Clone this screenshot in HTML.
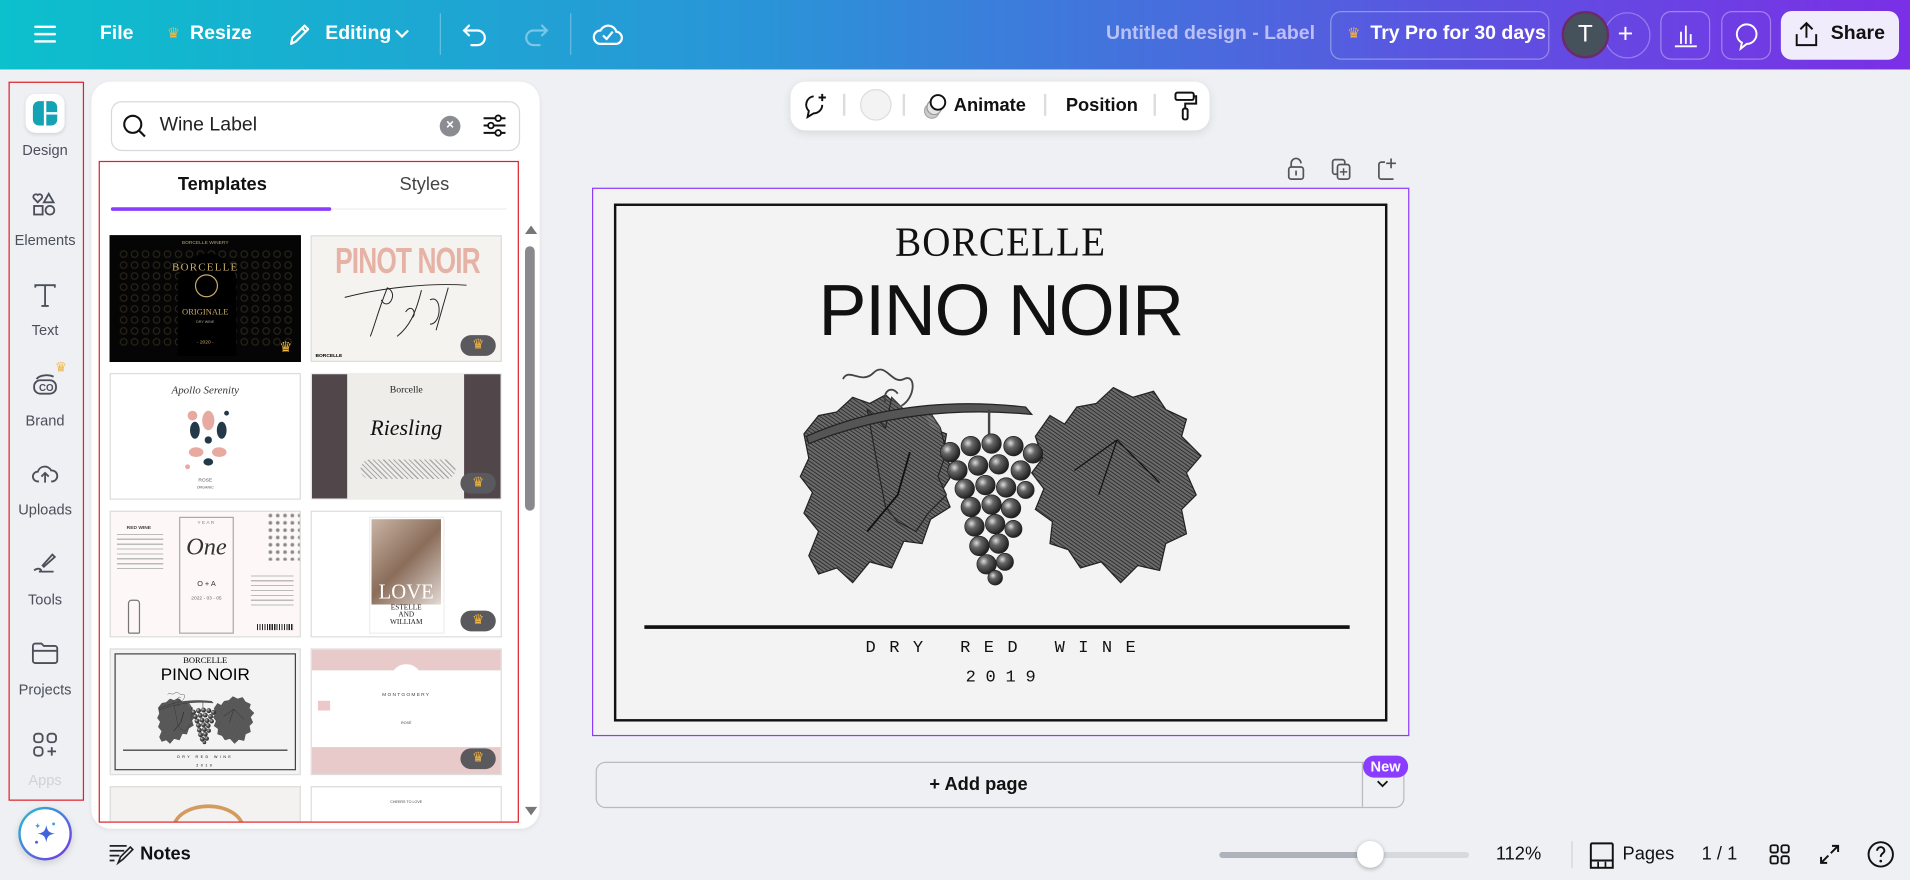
<!DOCTYPE html>
<html><head><meta charset="utf-8">
<style>
*{box-sizing:border-box;margin:0;padding:0}
html,body{width:1910px;height:880px;overflow:hidden;background:#eef0f3;font-family:"Liberation Sans",sans-serif}
#w{position:absolute;left:0;top:0;width:1568px;height:722px;transform:scale(1.2181,1.2188);transform-origin:0 0;background:#eef0f3;overflow:hidden}
.a{position:absolute}
.top{left:0;top:0;width:1568px;height:57px;background:linear-gradient(90deg,#0cc0cc 0%,#2a94d8 40%,#5a55e0 75%,#7b2fe6 100%)}
.tw{color:#fff;font-weight:bold;font-size:16px}
.sep{width:1px;height:34px;background:rgba(255,255,255,.3);top:11px}
.rail{font-size:12px;color:#4a4f5a;text-align:center;width:70px;left:2px}
.thumb{position:absolute;width:157px;height:104px;border:1px solid #dcdcdc;overflow:hidden}
.crown{position:absolute;right:4px;bottom:4px;width:29px;height:17px;border-radius:9px;background:#5a5a5e;color:#f5b740;font-size:11px;text-align:center;line-height:17px}
.btn{border:1px solid rgba(255,255,255,.35);border-radius:9px;height:40px;top:9px}
</style></head><body><div id="w">

<!-- top bar -->
<div class="a top"></div>
<svg class="a" style="left:27px;top:19px" width="20" height="18"><path d="M2 3h16M2 9h16M2 15h16" stroke="#fff" stroke-width="2" stroke-linecap="round"/></svg>
<div class="a tw" style="left:82px;top:19px">File</div>
<div class="a" style="left:137px;top:20px;color:#f5b740;font-size:12px">♛</div>
<div class="a tw" style="left:156px;top:19px">Resize</div>
<svg class="a" style="left:235px;top:17px" width="22" height="22"><path d="M4 19l1-5L15 4l3 3L8 17z M13 6l3 3" stroke="#fff" stroke-width="1.8" fill="none" stroke-linejoin="round"/></svg>
<div class="a tw" style="left:267px;top:19px">Editing</div>
<svg class="a" style="left:323px;top:22px" width="14" height="12"><path d="M2 3l5 5 5-5" stroke="#fff" stroke-width="1.8" fill="none"/></svg>
<div class="a sep" style="left:361px"></div>
<svg class="a" style="left:379px;top:17px" width="24" height="22"><path d="M6 4L2 8l4 4M2 8h11a6 6 0 010 12H8" stroke="#fff" stroke-width="1.8" fill="none" stroke-linecap="round"/></svg>
<svg class="a" style="left:427px;top:17px" width="24" height="22"><path d="M18 4l4 4-4 4M22 8H11a6 6 0 000 12h5" stroke="rgba(255,255,255,.4)" stroke-width="1.8" fill="none" stroke-linecap="round"/></svg>
<div class="a sep" style="left:468px"></div>
<svg class="a" style="left:486px;top:16px" width="26" height="24"><path d="M7 20h12a5 5 0 001-10 7 7 0 00-13-1 5.5 5.5 0 000 11z" stroke="#fff" stroke-width="1.8" fill="none"/><path d="M9 13l3 3 5-6" stroke="#fff" stroke-width="1.8" fill="none"/></svg>
<div class="a" style="left:908px;top:19px;color:rgba(225,220,255,.75);font-size:16px;font-weight:bold">Untitled design - Label</div>
<div class="a btn" style="left:1092px;width:180px"></div>
<div class="a" style="left:1106px;top:20px;color:#f5b740;font-size:12px">♛</div>
<div class="a tw" style="left:1125px;top:19px">Try Pro for 30 days</div>
<div class="a" style="left:1317px;top:10px;width:38px;height:38px;border-radius:50%;border:1px solid rgba(255,255,255,.3)"></div>
<div class="a tw" style="left:1328px;top:15px;font-weight:normal;font-size:22px">+</div>
<div class="a" style="left:1282px;top:9px;width:39px;height:39px;border-radius:50%;background:#45525b;border:2px solid #6b2a6a;color:#fff;font-size:20px;text-align:center;line-height:35px">T</div>
<div class="a btn" style="left:1363px;width:41px"></div>
<svg class="a" style="left:1373px;top:18px" width="22" height="22"><path d="M2 20h18M7 18V8M11 18V3M15 18V10" stroke="#fff" stroke-width="1.5"/></svg>
<div class="a btn" style="left:1413px;width:41px"></div>
<svg class="a" style="left:1423px;top:18px" width="22" height="24"><path d="M11 2a8 8 0 00-4 15l-1 5 5-4a8 8 0 000-16z" stroke="#fff" stroke-width="1.6" fill="none"/></svg>
<div class="a" style="left:1462px;top:9px;width:97px;height:40px;border-radius:9px;background:#f1ecfc"></div>
<svg class="a" style="left:1472px;top:17px" width="22" height="22"><path d="M11 14V2M6 7l5-5 5 5M3 11v9h16v-9" stroke="#111" stroke-width="1.6" fill="none"/></svg>
<div class="a" style="left:1503px;top:19px;font-weight:bold;font-size:16px;color:#111">Share</div>

<!-- left rail -->
<div class="a" style="left:7px;top:67px;width:62px;height:590px;border:1.5px solid #e0202a"></div>
<div class="a" style="left:21px;top:77px;width:32px;height:32px;border-radius:8px;background:#fff;box-shadow:0 1px 3px rgba(0,0,0,.12)"></div>
<div class="a" style="left:27px;top:83px;width:20px;height:20px;border-radius:5px;background:#13a3b5"></div>
<div class="a" style="left:36px;top:83px;width:2px;height:20px;background:#fff"></div>
<div class="a" style="left:38px;top:92px;width:9px;height:2px;background:#fff"></div>
<div class="a rail" style="top:116px">Design</div>
<svg class="a" style="left:26px;top:157px" width="22" height="22"><path d="M5 9l-3-3a2 2 0 013-3 2 2 0 013 3z M14 2l4 7h-8z" stroke="#4a4f5a" stroke-width="1.5" fill="none"/><rect x="2" y="12" width="7" height="7" stroke="#4a4f5a" stroke-width="1.5" fill="none"/><circle cx="15" cy="15.5" r="3.6" stroke="#4a4f5a" stroke-width="1.5" fill="none"/></svg>
<div class="a rail" style="top:190px">Elements</div>
<svg class="a" style="left:26px;top:231px" width="22" height="22"><path d="M3 5V3h16v2M11 3v17M8 20h6" stroke="#4a4f5a" stroke-width="1.5" fill="none"/></svg>
<div class="a rail" style="top:264px">Text</div>
<svg class="a" style="left:25px;top:303px" width="24" height="24"><rect x="3" y="9" width="18" height="11" rx="5" stroke="#4a4f5a" stroke-width="1.5" fill="none"/><path d="M5 8a9 5 0 0114-2" stroke="#4a4f5a" stroke-width="1.5" fill="none"/><text x="7" y="18" font-size="8" font-family="Liberation Sans" fill="#4a4f5a" font-weight="bold">CO</text></svg>
<div class="a" style="left:45px;top:295px;color:#f5b740;font-size:11px">♛</div>
<div class="a rail" style="top:338px">Brand</div>
<svg class="a" style="left:25px;top:377px" width="24" height="22"><path d="M7 18H6a4 4 0 010-8 6 6 0 0111-1 4.5 4.5 0 011 9h-1" stroke="#4a4f5a" stroke-width="1.5" fill="none"/><path d="M12 19v-7M9 14l3-3 3 3" stroke="#4a4f5a" stroke-width="1.5" fill="none"/></svg>
<div class="a rail" style="top:411px">Uploads</div>
<svg class="a" style="left:25px;top:450px" width="24" height="24"><path d="M10 14l8-9 2 2-9 8z M3 18c4-3 8 0 4 1h12" stroke="#4a4f5a" stroke-width="1.5" fill="none"/></svg>
<div class="a rail" style="top:485px">Tools</div>
<svg class="a" style="left:25px;top:525px" width="24" height="22"><path d="M2 5a2 2 0 012-2h5l2 2h9a2 2 0 012 2v10a2 2 0 01-2 2H4a2 2 0 01-2-2z M2 9h20" stroke="#4a4f5a" stroke-width="1.5" fill="none"/></svg>
<div class="a rail" style="top:559px">Projects</div>
<svg class="a" style="left:25px;top:599px" width="24" height="24"><rect x="3" y="3" width="7" height="7" rx="2.5" stroke="#4a4f5a" stroke-width="1.5" fill="none"/><rect x="14" y="3" width="7" height="7" rx="2.5" stroke="#4a4f5a" stroke-width="1.5" fill="none"/><rect x="3" y="14" width="7" height="7" rx="2.5" stroke="#4a4f5a" stroke-width="1.5" fill="none"/><path d="M17.5 14v7M14 17.5h7" stroke="#4a4f5a" stroke-width="1.5"/></svg>
<div class="a rail" style="top:633px;color:#cfd2d8">Apps</div>
<div class="a" style="left:15px;top:662px;width:44px;height:44px;border-radius:50%;background:linear-gradient(135deg,#1ec3d0,#7b2fe6);box-shadow:0 2px 6px rgba(0,0,0,.15)"></div>
<div class="a" style="left:17px;top:664px;width:40px;height:40px;border-radius:50%;background:#fff"></div>
<svg class="a" style="left:25px;top:672px" width="24" height="24"><path d="M13 5c1 5 2 6 7 7-5 1-6 2-7 7-1-5-2-6-7-7 5-1 6-2 7-7z" fill="#4263d9"/><path d="M6 3c.4 2 .8 2.4 2.5 2.5C6.8 5.9 6.4 6.3 6 8 5.6 6.3 5.200 5.900 3.5 5.5 5.2 5.1 5.6 4.7 6 3z" fill="#3fa0e0"/><circle cx="19" cy="4" r="1.2" fill="#3fa0e0"/><circle cx="5" cy="19" r="1.2" fill="#4263d9"/></svg>

<!-- panel -->
<div class="a" style="left:75px;top:67px;width:368px;height:613px;background:#fff;border-radius:16px;box-shadow:0 1px 4px rgba(0,0,0,.06)"></div>
<div class="a" style="left:91px;top:83px;width:336px;height:41px;border:1px solid #d7d9de;border-radius:9px"></div>
<svg class="a" style="left:100px;top:93px" width="22" height="22"><circle cx="9" cy="9" r="7" stroke="#111" stroke-width="1.7" fill="none"/><path d="M14 14l5 5" stroke="#111" stroke-width="1.8"/></svg>
<div class="a" style="left:131px;top:94px;font-size:16px;color:#222">Wine Label</div>
<div class="a" style="left:361px;top:95px;width:17px;height:17px;border-radius:50%;background:#8a8c92;color:#fff;font-size:11px;text-align:center;line-height:17px;font-weight:bold">×</div>
<svg class="a" style="left:395px;top:92px" width="22" height="22"><path d="M2 5h18M2 11h18M2 17h18" stroke="#111" stroke-width="1.6"/><circle cx="14" cy="5" r="2.3" fill="#fff" stroke="#111" stroke-width="1.5"/><circle cx="8" cy="11" r="2.3" fill="#fff" stroke="#111" stroke-width="1.5"/><circle cx="14" cy="17" r="2.3" fill="#fff" stroke="#111" stroke-width="1.5"/></svg>
<div class="a" style="left:81px;top:132px;width:345px;height:543px;border:1.5px solid #e0202a"></div>
<div class="a" style="left:146px;top:143px;font-size:15px;font-weight:bold;color:#111">Templates</div>
<div class="a" style="left:328px;top:143px;font-size:15px;color:#444">Styles</div>
<div class="a" style="left:91px;top:170px;width:181px;height:3px;background:#8b3dff;border-radius:2px"></div>
<div class="a" style="left:272px;top:171px;width:144px;height:1px;background:#eee"></div>
<!-- scrollbar -->
<div class="a" style="left:431px;top:185px;width:0;height:0;border-left:5px solid transparent;border-right:5px solid transparent;border-bottom:7px solid #777"></div>
<div class="a" style="left:431px;top:202px;width:8px;height:217px;border-radius:4px;background:#8a8a8e"></div>
<div class="a" style="left:431px;top:662px;width:0;height:0;border-left:5px solid transparent;border-right:5px solid transparent;border-top:7px solid #777"></div>

<!-- thumbnails -->
<div class="thumb" style="left:90px;top:193px;background:#050505;border-color:#050505">
 <div class="a" style="left:0;top:2px;width:100%;text-align:center;font-size:4px;color:#b9a06a">BORCELLE WINERY</div>
 <div class="a" style="left:6px;top:10px;width:145px;height:80px;background:radial-gradient(circle,transparent 2px,#3a3320 2.5px,transparent 3.5px) 0 0/9px 9px;opacity:.9"></div>
 <div class="a" style="left:55px;top:14px;width:48px;height:84px;border-radius:24px 24px 0 0;background:#000"></div>
 <div class="a" style="left:0;top:20px;width:100%;text-align:center;font-family:'Liberation Serif';font-size:9px;color:#c8aa68;letter-spacing:1px">BORCELLE</div>
 <div class="a" style="left:69px;top:31px;width:19px;height:19px;border-radius:50%;border:1px solid #c8aa68"></div>
 <div class="a" style="left:0;top:58px;width:100%;text-align:center;font-family:'Liberation Serif';font-size:7px;color:#c8aa68">ORIGINALE</div>
 <div class="a" style="left:0;top:68px;width:100%;text-align:center;font-size:3px;color:#aa9">DRY WINE</div>
 <div class="a" style="left:0;top:84px;width:100%;text-align:center;font-size:4px;color:#c8aa68">- 2020 -</div>
 <div class="a" style="right:6px;bottom:4px;color:#f5b740;font-size:12px">♛</div>
</div>
<div class="thumb" style="left:255px;top:193px;background:#f5f3ef">
 <div class="a" style="left:-20px;top:2px;width:197px;text-align:center;font-size:30px;font-weight:bold;color:#e7b2a6;letter-spacing:-1px;transform:scaleX(.72);line-height:38px;white-space:nowrap">PINOT NOIR</div>
 <svg class="a" style="left:22px;top:32px" width="120" height="60"><path d="M5 18c30-8 70-12 100-10M40 10c-8 20-10 30-14 40M40 10c10 5 0 20-5 10 M55 30c5-8 10 2 5 5 M68 12c-5 20-10 30-20 38 M75 20c10-5 10 20 0 20 M90 10l-10 35" stroke="#222" stroke-width=".8" fill="none"/></svg>
 <div class="a" style="left:3px;bottom:2px;font-size:4px;font-weight:bold">BORCELLE</div>
 <div class="crown">♛</div>
</div>
<div class="thumb" style="left:90px;top:306px;background:#fff">
 <div class="a" style="left:0;top:8px;width:100%;text-align:center;font-family:'Liberation Serif';font-style:italic;font-size:9px;color:#333">Apollo Serenity</div>
 <svg class="a" style="left:57px;top:24px" width="46" height="58"><circle cx="10" cy="10" r="4" fill="#e8aaa0"/><ellipse cx="12" cy="22" rx="4" ry="7" fill="#23394a"/><ellipse cx="23" cy="14" rx="5" ry="8" fill="#e8aaa0"/><ellipse cx="34" cy="22" rx="4" ry="7" fill="#23394a"/><circle cx="23" cy="30" r="3" fill="#23394a"/><ellipse cx="13" cy="40" rx="6" ry="4" fill="#e8aaa0"/><ellipse cx="32" cy="40" rx="6" ry="4" fill="#e8aaa0"/><ellipse cx="23" cy="48" rx="4" ry="3" fill="#23394a"/><circle cx="38" cy="8" r="2" fill="#23394a"/><circle cx="6" cy="52" r="2" fill="#e8aaa0"/></svg>
 <div class="a" style="left:0;top:84px;width:100%;text-align:center;font-size:4px;color:#555">ROSE</div>
 <div class="a" style="left:0;top:91px;width:100%;text-align:center;font-size:3px;color:#555">ORGANIC</div>
</div>
<div class="thumb" style="left:255px;top:306px;background:#eeede9;border-color:#eee">
 <div class="a" style="left:0;top:0;width:29px;height:104px;background:#51474b"></div>
 <div class="a" style="right:0;top:0;width:30px;height:104px;background:#51474b"></div>
 <div class="a" style="left:0;top:8px;width:100%;text-align:center;font-family:'Liberation Serif';font-size:8px;color:#222">Borcelle</div>
 <div class="a" style="left:0;top:34px;width:100%;text-align:center;font-family:'Liberation Serif';font-style:italic;font-size:18px;color:#111">Riesling</div>
 <div class="a" style="left:40px;top:70px;width:78px;height:16px;background:repeating-linear-gradient(45deg,#aaa 0 1px,transparent 1px 3px);border-radius:8px"></div>
 <div class="crown">♛</div>
</div>
<div class="thumb" style="left:90px;top:419px;background:#fdf8f7">
 <div class="a" style="left:3px;top:10px;font-size:4px;color:#444;font-weight:bold;width:40px;text-align:center">RED WINE</div>
 <div class="a" style="left:5px;top:18px;width:38px;height:30px;background:repeating-linear-gradient(#bbb 0 1px,transparent 1px 4px)"></div>
 <div class="a" style="left:56px;top:4px;width:45px;height:96px;border:1px solid #aaa"></div>
 <div class="a" style="left:56px;top:6px;width:45px;text-align:center;font-size:4px;color:#888;letter-spacing:1px">YEAR</div>
 <div class="a" style="left:56px;top:18px;width:45px;text-align:center;font-family:'Liberation Serif';font-style:italic;font-size:20px;color:#333">One</div>
 <div class="a" style="left:56px;top:57px;width:45px;text-align:center;font-size:6px;color:#333">O + A</div>
 <div class="a" style="left:56px;top:68px;width:45px;text-align:center;font-size:4px;color:#666">2022 - 03 - 05</div>
 <div class="a" style="left:128px;top:0;width:28px;height:40px;background:radial-gradient(circle,#888 1px,transparent 2px) 0 0/6px 6px"></div>
 <div class="a" style="left:115px;top:52px;width:35px;height:25px;background:repeating-linear-gradient(#bbb 0 1px,transparent 1px 4px)"></div>
 <div class="a" style="left:120px;top:92px;width:30px;height:5px;background:repeating-linear-gradient(90deg,#222 0 1px,transparent 1px 2px)"></div>
 <div class="a" style="left:14px;top:72px;width:10px;height:28px;border:1px solid #777;border-radius:3px 3px 1px 1px"></div>
</div>
<div class="thumb" style="left:255px;top:419px;background:#fff">
 <div class="a" style="left:47px;top:4px;width:62px;height:96px;border:1px solid #eee;background:#fff"></div>
 <div class="a" style="left:49px;top:6px;width:57px;height:70px;background:linear-gradient(135deg,#c9b4a4,#8a6d5a 50%,#e2dad4)"></div>
 <div class="a" style="left:49px;top:57px;width:57px;text-align:center;font-family:'Liberation Serif';font-size:17px;color:#fff;line-height:18px">LOVE</div>
 <div class="a" style="left:49px;top:76px;width:57px;text-align:center;font-family:'Liberation Serif';font-size:6px;color:#222;line-height:6px">ESTELLE<br>AND<br>WILLIAM</div>
 <div class="crown">♛</div>
</div>
<div class="thumb" style="left:90px;top:532px;background:#f3f3f3">
 <div class="a" style="left:3px;top:3px;width:149px;height:96px;border:1px solid #444"></div>
 <div class="a" style="left:0;top:5px;width:100%;text-align:center;font-family:'Liberation Serif';font-size:7px">BORCELLE</div>
 <div class="a" style="left:0;top:12px;width:100%;text-align:center;font-size:14px">PINO NOIR</div>
 <svg class="a" style="left:37px;top:33px" width="82" height="45" viewBox="0 0 340 185"><use href="#grape"/></svg>
 <div class="a" style="left:10px;top:82px;width:135px;height:1px;background:#333"></div>
 <div class="a" style="left:0;top:86px;width:100%;text-align:center;font-size:3px;letter-spacing:2px">DRY RED WINE</div>
 <div class="a" style="left:0;top:93px;width:100%;text-align:center;font-size:3px;letter-spacing:2px">2019</div>
</div>
<div class="thumb" style="left:255px;top:532px;background:#fff">
 <div class="a" style="left:0;top:0;width:100%;height:17px;background:#e8caca"></div>
 <div class="a" style="left:0;bottom:0;width:100%;height:22px;background:#e8caca"></div>
 <div class="a" style="left:65px;top:12px;width:25px;height:12px;border-radius:12px 12px 0 0;background:#fff"></div>
 <div class="a" style="left:0;top:34px;width:100%;text-align:center;font-size:4px;color:#444;letter-spacing:1px">MONTGOMERY</div>
 <div class="a" style="left:0;top:58px;width:100%;text-align:center;font-size:3px;color:#444">ROSÉ</div>
 <div class="a" style="left:5px;top:42px;width:10px;height:8px;background:#edc8c8"></div>
 <div class="crown">♛</div>
</div>
<div class="thumb" style="left:90px;top:645px;height:29px;background:#f4f2f0;border-bottom:none">
 <div class="a" style="left:50px;top:14px;width:60px;height:40px;border-radius:50%;border:3px solid #d49a5e"></div>
</div>
<div class="thumb" style="left:255px;top:645px;height:29px;background:#fff;border-bottom:none">
 <div class="a" style="left:0;top:10px;width:100%;text-align:center;font-size:3px;color:#444">CHEERS TO LOVE</div>
</div>

<!-- floating toolbar -->
<div class="a" style="left:649px;top:67px;width:344px;height:40px;background:#fff;border-radius:12px;box-shadow:0 2px 8px rgba(0,0,0,.1)"></div>
<svg class="a" style="left:657px;top:75px" width="24" height="24"><path d="M11 4a7 7 0 00-4 12l-1 5 5-3a7 7 0 007-7" stroke="#111" stroke-width="1.6" fill="none"/><path d="M18 2v6M15 5h6" stroke="#111" stroke-width="1.6"/></svg>
<div class="a" style="left:692px;top:77px;width:2px;height:18px;background:#ddd"></div>
<div class="a" style="left:706px;top:73px;width:26px;height:26px;border-radius:50%;background:#f3f3f3;border:1px solid #ddd"></div>
<div class="a" style="left:741px;top:77px;width:2px;height:18px;background:#ddd"></div>
<svg class="a" style="left:756px;top:75px" width="24" height="24"><circle cx="9" cy="16" r="6" fill="#ccc" stroke="#aaa"/><circle cx="11" cy="13" r="6" fill="#e5e5e5" stroke="#999"/><circle cx="14" cy="9" r="6" fill="#fff" stroke="#111" stroke-width="1.6"/></svg>
<div class="a" style="left:783px;top:78px;font-size:15px;font-weight:bold;color:#111">Animate</div>
<div class="a" style="left:857px;top:77px;width:2px;height:18px;background:#ddd"></div>
<div class="a" style="left:875px;top:78px;font-size:15px;font-weight:bold;color:#111">Position</div>
<div class="a" style="left:947px;top:77px;width:2px;height:18px;background:#ddd"></div>
<svg class="a" style="left:962px;top:74px" width="22" height="26"><rect x="3" y="2" width="15" height="6" rx="1.5" stroke="#111" stroke-width="1.6" fill="none"/><path d="M18 5h2v6h-9v4" stroke="#111" stroke-width="1.6" fill="none"/><rect x="9" y="15" width="4" height="9" rx="1.5" stroke="#111" stroke-width="1.6" fill="none"/></svg>

<!-- page icons -->
<svg class="a" style="left:1055px;top:129px" width="18" height="20"><path d="M5 8V5a4 4 0 018 0" stroke="#555" stroke-width="1.4" fill="none"/><rect x="3" y="8" width="12" height="10" rx="2" stroke="#555" stroke-width="1.4" fill="none"/><path d="M9 11v4" stroke="#555" stroke-width="1.4"/></svg>
<svg class="a" style="left:1092px;top:129px" width="20" height="20"><rect x="2" y="2" width="10" height="12" rx="2" stroke="#555" stroke-width="1.4" fill="none"/><rect x="6" y="6" width="10" height="12" rx="2" stroke="#555" stroke-width="1.4" fill="#eef0f3"/><path d="M11 9v6M8 12h6" stroke="#555" stroke-width="1.2"/></svg>
<svg class="a" style="left:1129px;top:129px" width="20" height="20"><path d="M8 4H5a2 2 0 00-2 2v10a2 2 0 002 2h10M13 1v8M9 5h8" stroke="#555" stroke-width="1.4" fill="none"/></svg>

<!-- page -->
<div class="a" style="left:486px;top:154px;width:671px;height:450px;border:1.5px solid #8b3dff;background:#f3f3f3"></div>
<div class="a" style="left:504px;top:167px;width:635px;height:425px;border:2.5px solid #111"></div>
<div class="a" style="left:486px;top:180px;width:671px;text-align:center;font-family:'Liberation Serif',serif;font-size:32px;color:#111;letter-spacing:1px;transform:scaleY(1.05)">BORCELLE</div>
<div class="a" style="left:486px;top:222px;width:671px;text-align:center;font-family:'Liberation Sans',sans-serif;font-size:59px;color:#111;line-height:66px;letter-spacing:-1px">PINO NOIR</div>
<svg class="a" style="left:652px;top:296px" width="340" height="185" viewBox="0 0 340 185">
<defs>
<pattern id="h" width="2.5" height="2.5" patternUnits="userSpaceOnUse" patternTransform="rotate(35)"><rect width="3" height="3" fill="#6a6a6a"/><path d="M0 0h3" stroke="#1e1e1e" stroke-width="1.2"/></pattern>
<radialGradient id="g" cx=".35" cy=".35" r=".7"><stop offset="0" stop-color="#ddd"/><stop offset=".35" stop-color="#666"/><stop offset="1" stop-color="#1a1a1a"/></radialGradient>
<symbol id="grape" viewBox="0 0 340 185">
<path d="M8 60 L20 45 L35 42 L48 30 L62 35 L75 28 L88 40 L102 38 L112 55 L125 60 L122 78 L132 90 L122 105 L128 120 L112 130 L105 150 L90 148 L80 170 L62 165 L48 182 L35 170 L20 175 L12 160 L20 140 L8 125 L15 108 L5 95 L12 80 Z" fill="url(#h)" stroke="#222" stroke-width="1"/>
<path d="M60 40 L75 55 L80 30 L95 45 L110 40 L120 55 L125 75 L118 95 L125 110 L110 125 L100 140 L85 132 L75 120 L70 95 Z" fill="url(#h)" stroke="#222" stroke-width="1" opacity=".9"/>
<path d="M198 62 L210 45 L222 52 L232 38 L248 35 L262 22 L278 30 L295 25 L305 40 L322 48 L318 62 L334 78 L322 92 L330 110 L318 122 L322 142 L305 150 L300 172 L282 168 L268 182 L252 165 L235 170 L225 155 L210 150 L212 132 L198 122 L205 105 L195 92 L204 80 Z" fill="url(#h)" stroke="#222" stroke-width="1"/>
<path d="M10 62 C60 40 120 30 190 38 L195 44 C130 38 70 45 12 68 Z" fill="#555" stroke="#222"/>
<path d="M40 15 c5-10 15 5 25-5 s15 10 25 5 s10 15 -2 22 M75 35 c-3-10 5-15 10-8" stroke="#444" stroke-width="1.5" fill="none"/>
<path d="M95 75 L85 110 L60 140" stroke="#111" stroke-width="1.5" fill="none"/>
<path d="M265 65 L250 110 M265 65 L300 100 M265 65 L230 90" stroke="#111" stroke-width="1" fill="none"/>
<path d="M160 40 L160 65" stroke="#444" stroke-width="2"/>
<g fill="url(#g)" stroke="#222" stroke-width=".6">
<circle cx="128" cy="75" r="8"/><circle cx="145" cy="70" r="8"/><circle cx="162" cy="68" r="8"/><circle cx="180" cy="70" r="8"/><circle cx="196" cy="76" r="8"/>
<circle cx="134" cy="90" r="8"/><circle cx="151" cy="86" r="8"/><circle cx="168" cy="85" r="8"/><circle cx="186" cy="90" r="8"/>
<circle cx="140" cy="105" r="8"/><circle cx="157" cy="102" r="8"/><circle cx="174" cy="104" r="8"/><circle cx="190" cy="106" r="7"/>
<circle cx="145" cy="120" r="8"/><circle cx="162" cy="118" r="8"/><circle cx="178" cy="121" r="8"/>
<circle cx="148" cy="136" r="8"/><circle cx="165" cy="134" r="8"/><circle cx="180" cy="138" r="7"/>
<circle cx="152" cy="152" r="8"/><circle cx="168" cy="150" r="8"/>
<circle cx="158" cy="167" r="8"/><circle cx="173" cy="165" r="7"/><circle cx="165" cy="178" r="6"/>
</g>
</symbol>
</defs>
<use href="#grape"/>
</svg>
<div class="a" style="left:529px;top:513px;width:579px;height:3px;background:#111"></div>
<div class="a" style="left:486px;top:524px;width:671px;text-align:center;font-family:'Liberation Mono',monospace;font-size:14px;color:#111;letter-spacing:11px;padding-left:11px">DRY RED WINE</div>
<div class="a" style="left:486px;top:548px;width:671px;text-align:center;font-family:'Liberation Mono',monospace;font-size:14px;color:#111;letter-spacing:8px;padding-left:8px">2019</div>

<!-- add page -->
<div class="a" style="left:489px;top:625px;width:664px;height:38px;border:1px solid #b8bac0;border-radius:8px"></div>
<div class="a" style="left:1118px;top:626px;width:1px;height:36px;background:#b8bac0"></div>
<div class="a" style="left:763px;top:635px;font-size:15px;font-weight:bold;color:#111">+ Add page</div>
<svg class="a" style="left:1129px;top:638px" width="12" height="10"><path d="M2 3l4 4 4-4" stroke="#111" stroke-width="1.5" fill="none"/></svg>
<div class="a" style="left:1119px;top:620px;width:37px;height:18px;border-radius:9px;background:#8b3dff;color:#fff;font-size:12px;font-weight:bold;text-align:center;line-height:18px">New</div>

<!-- bottom bar -->
<svg class="a" style="left:89px;top:692px" width="22" height="18"><path d="M1 2h14M1 6h12M1 10h8M1 14h4M8 16l2-5 8-8 2 2-8 8z" stroke="#222" stroke-width="1.4" fill="none"/></svg>
<div class="a" style="left:115px;top:692px;font-size:15px;font-weight:bold;color:#111">Notes</div>
<div class="a" style="left:1001px;top:699px;width:205px;height:5px;border-radius:3px;background:#d7d9de"></div>
<div class="a" style="left:1001px;top:699px;width:124px;height:5px;border-radius:3px;background:#aeb3bb"></div>
<div class="a" style="left:1114px;top:690px;width:22px;height:22px;border-radius:50%;background:#fff;box-shadow:0 1px 4px rgba(0,0,0,.3)"></div>
<div class="a" style="left:1228px;top:692px;font-size:15px;color:#111">112%</div>
<div class="a" style="left:1290px;top:690px;width:1px;height:22px;background:#d0d2d6"></div>
<svg class="a" style="left:1304px;top:690px" width="22" height="24"><rect x="2" y="2" width="18" height="14" rx="1" stroke="#111" stroke-width="1.6" fill="none"/><rect x="2" y="16" width="18" height="6" stroke="#111" stroke-width="1.6" fill="none"/><path d="M8 17v5M14 17v5" stroke="#111" stroke-width="1.4"/></svg>
<div class="a" style="left:1332px;top:692px;font-size:15px;color:#111">Pages</div>
<div class="a" style="left:1397px;top:692px;font-size:15px;color:#111">1 / 1</div>
<svg class="a" style="left:1452px;top:692px" width="18" height="18"><rect x="1.5" y="1.5" width="6" height="6" rx="1.5" stroke="#111" stroke-width="1.5" fill="none"/><rect x="10.5" y="1.5" width="6" height="6" rx="1.5" stroke="#111" stroke-width="1.5" fill="none"/><rect x="1.5" y="10.5" width="6" height="6" rx="1.5" stroke="#111" stroke-width="1.5" fill="none"/><rect x="10.5" y="10.5" width="6" height="6" rx="1.5" stroke="#111" stroke-width="1.5" fill="none"/></svg>
<svg class="a" style="left:1493px;top:692px" width="18" height="18"><path d="M11 2h5v5M16 2l-6 6M7 16H2v-5M2 16l6-6" stroke="#111" stroke-width="1.6" fill="none"/></svg>
<svg class="a" style="left:1532px;top:689px" width="24" height="24"><circle cx="12" cy="12" r="10" stroke="#111" stroke-width="1.6" fill="none"/><path d="M9 9a3 3 0 116 0c0 2-3 2-3 5" stroke="#111" stroke-width="1.6" fill="none"/><circle cx="12" cy="17.5" r="1.1" fill="#111"/></svg>
</div></body></html>
